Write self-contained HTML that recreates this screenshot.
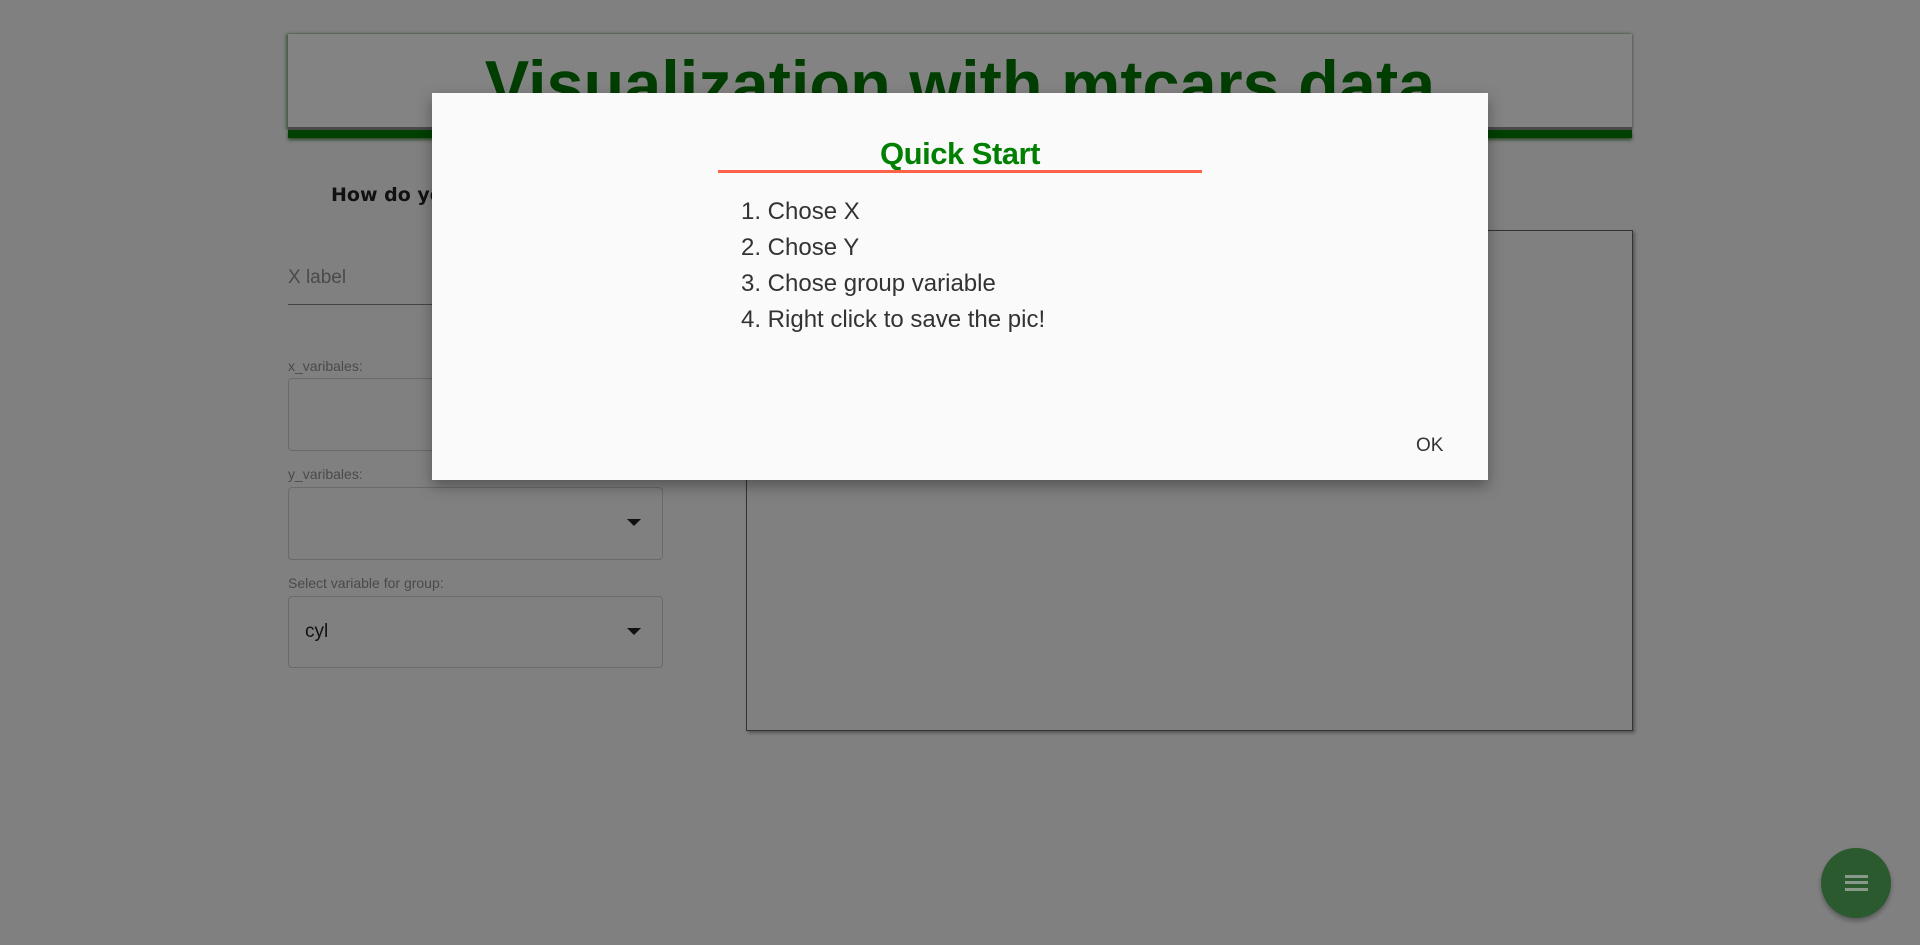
<!DOCTYPE html>
<html><head><meta charset="utf-8">
<style>
*{box-sizing:border-box;margin:0;padding:0}
body{width:1920px;height:945px;background:#808080;font-family:"Liberation Sans",Arial,sans-serif;position:relative;overflow:hidden}
.abs{position:absolute}
.card{left:288px;top:34px;width:1344px;height:96px;background:#838383;box-shadow:-2px 0 3px rgba(0,60,0,.5),1px 0 2px rgba(60,60,60,.5);border-bottom:3px solid #4a4a4a}
.gbar{left:288px;top:130px;width:1344px;height:8px;background:#004000;box-shadow:0 2px 3px #2a4a2a}
.title{left:288px;width:1344px;top:50px;text-align:center;color:#003d00;font-weight:bold;font-size:68px;line-height:70px;white-space:nowrap}
.title span{display:inline-block;transform:scaleX(.98);transform-origin:center}
.lbl{color:#4a4a4a;font-size:14px}
.box{border:1px solid #6a6a6a;border-radius:4px;width:375px}
.arrow{width:0;height:0;border-left:7px solid transparent;border-right:7px solid transparent;border-top:7px solid #111}
.modal{left:432px;top:93px;width:1056px;height:387px;background:#fafafa;box-shadow:0 6px 14px rgba(0,0,0,.35)}
.li{left:741px;font-size:24px;color:#333;line-height:30px}
</style></head><body>
<div class="abs card"></div>
<div class="abs gbar"></div>
<div class="abs title"><span>Visualization with mtcars data</span></div>

<div class="abs" style="left:331px;top:184px;font-family:'DejaVu Sans',sans-serif;font-size:19px;font-weight:bold;color:#111">How do you like the plot?</div>
<div class="abs" style="left:288px;top:267px;font-size:19px;color:#4a4a4a">X label</div>
<div class="abs" style="left:288px;top:304px;width:375px;height:1px;background:#444"></div>

<div class="abs lbl" style="left:288px;top:358px">x_varibales:</div>
<div class="abs box" style="left:288px;top:378px;height:73px"></div>
<div class="abs lbl" style="left:288px;top:466px">y_varibales:</div>
<div class="abs box" style="left:288px;top:487px;height:73px"></div>
<div class="abs arrow" style="left:627px;top:519px"></div>
<div class="abs lbl" style="left:288px;top:575px">Select variable for group:</div>
<div class="abs box" style="left:288px;top:596px;height:72px"></div>
<div class="abs" style="left:305px;top:621px;font-size:19px;color:#111">cyl</div>
<div class="abs arrow" style="left:627px;top:628px"></div>

<div class="abs" style="left:746px;top:230px;width:887px;height:501px;border:1px solid #333;box-shadow:2px 2px 3px #555"></div>

<div class="abs modal"></div>
<div class="abs" style="left:432px;width:1056px;top:136px;text-align:center;font-size:31px;font-weight:bold;color:#008000;letter-spacing:-.5px">Quick Start</div>
<div class="abs" style="left:718px;top:170px;width:484px;height:3px;background:#ff6347"></div>
<div class="abs li" style="top:197px">1. Chose X</div>
<div class="abs li" style="top:233px">2. Chose Y</div>
<div class="abs li" style="top:269px">3. Chose group variable</div>
<div class="abs li" style="top:305px">4. Right click to save the pic!</div>
<div class="abs" style="left:1416px;top:435px;font-size:19px;color:#333">OK</div>

<div class="abs" style="left:1821px;top:848px;width:70px;height:70px;border-radius:50%;background:#2b5a2e;box-shadow:0 3px 5px rgba(0,0,0,.3)"></div>
<div class="abs" style="left:1845px;top:875px;width:23px;height:3px;background:#8a9a8a"></div>
<div class="abs" style="left:1845px;top:881px;width:23px;height:3px;background:#8a9a8a"></div>
<div class="abs" style="left:1845px;top:888px;width:23px;height:3px;background:#8a9a8a"></div>
</body></html>
